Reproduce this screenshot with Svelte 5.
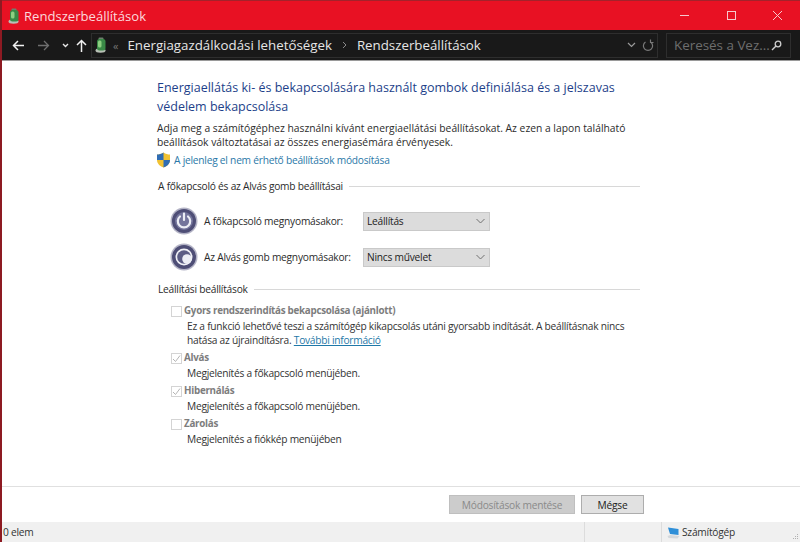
<script>
  const options = [
    {
      title: "Gyors rendszerindítás bekapcsolása (ajánlott)",
      checked: false,
      lines: "Ez a funkció lehetővé teszi a számítógép kikapcsolás utáni gyorsabb indítását. A beállításnak nincs hatása az újraindításra.",
      link: "További információ",
    },
    { title: "Alvás", checked: true, lines: "Megjelenítés a főkapcsoló menüjében." },
    { title: "Hibernálás", checked: true, lines: "Megjelenítés a főkapcsoló menüjében." },
    { title: "Zárolás", checked: false, lines: "Megjelenítés a fiókkép menüjében" },
  ];
</script>

{#snippet battery(w, h)}
  <svg width={w} height={h} viewBox="0 0 12 16">
    <ellipse cx="5.500" cy="13.500" rx="5" ry="2.200" fill="#b9c0b6" />
    <rect x="3.500" y="0.500" width="5" height="2.500" rx="1" fill="#6f7f6e" />
    <rect x="2" y="2" width="8.500" height="11.500" rx="2.500" fill="#3a8a47" />
    <rect x="3" y="3.500" width="3.500" height="7" rx="1.500" fill="#8ccf80" />
  </svg>
{/snippet}

<div class="window">
  <header class="titlebar">
    <div class="title">
      {@render battery(12, 16)}
      <span>Rendszerbeállítások</span>
    </div>
    <div class="controls">
      <svg width="11" height="11" viewBox="0 0 11 11"><path d="M0 5.500h9" stroke="#f6c9cd" fill="none" /></svg>
      <svg width="11" height="11" viewBox="0 0 11 11"><rect x="1.500" y="1.500" width="8" height="8" stroke="#f6c9cd" fill="none" /></svg>
      <svg width="11" height="11" viewBox="0 0 11 11"><path d="M1 1l9 9M10 1l-9 9" stroke="#f6c9cd" fill="none" /></svg>
    </div>
  </header>

  <nav class="navbar">
    <div class="navbtns">
      <svg width="13" height="11" viewBox="0 0 13 11"><path d="M12 5.500H1.500M6 1L1.500 5.500 6 10" stroke="#f2f2f2" stroke-width="1.500" fill="none" /></svg>
      <svg width="13" height="11" viewBox="0 0 13 11"><path d="M1 5.500h10.500M7 1l4.500 4.500L7 10" stroke="#6f6f6f" stroke-width="1.300" fill="none" /></svg>
      <svg width="7" height="5" viewBox="0 0 7 5"><path d="M1 1l2.500 2.500L6 1" stroke="#e8e8e8" stroke-width="1.400" fill="none" /></svg>
      <svg class="up" width="11" height="13" viewBox="0 0 11 13"><path d="M5.500 13V1.500M1 6l4.500-4.500L10 6" stroke="#f2f2f2" stroke-width="1.500" fill="none" /></svg>
    </div>
    <div class="address">
      {@render battery(12, 16)}
      <span class="crumbsep first">«</span>
      <span class="crumb">Energiagazdálkodási lehetőségek</span>
      <svg class="crumbarrow" width="5" height="8" viewBox="0 0 5 8"><path d="M1 1l3 3-3 3" stroke="#8a8a8a" fill="none" /></svg>
      <span class="crumb">Rendszerbeállítások</span>
      <span class="grow"></span>
      <svg width="9" height="6" viewBox="0 0 9 6"><path d="M1 1l3.500 3.500L8 1" stroke="#9a9a9a" stroke-width="1.200" fill="none" /></svg>
      <svg class="refresh" width="12" height="13" viewBox="0 0 12 13"><path d="M8.500 3a4.600 4.600 0 1 1-5 0M8.500 0.500V3.500H11.500" stroke="#7a7a7a" stroke-width="1.200" fill="none" /></svg>
    </div>
    <div class="search">
      <span>Keresés a Vez...</span>
      <svg width="11" height="11" viewBox="0 0 11 11"><circle cx="7" cy="4" r="2.800" stroke="#cfcfcf" stroke-width="1.300" fill="none" /><path d="M5 6L1 10" stroke="#cfcfcf" stroke-width="1.500" /></svg>
    </div>
  </nav>

  <main class="body">
    <div class="content">
      <h1>Energiaellátás ki- és bekapcsolására használt gombok definiálása és a jelszavas védelem bekapcsolása</h1>
      <p class="intro">Adja meg a számítógéphez használni kívánt energiaellátási beállításokat. Az ezen a lapon található<br />beállítások változtatásai az összes energiasémára érvényesek.</p>
      <div class="admin">
        <svg width="15" height="16" viewBox="0 0 15 16">
          <path d="M7.500 0.500C5.500 2 3 2.500 1 2.500V8c0 4 3.500 6.500 6.500 7.500 3-1 6.500-3.500 6.500-7.500V2.500c-2 0-4.500-.5-6.500-2z" fill="#f1c232" />
          <path d="M7.500 0.500C5.500 2 3 2.500 1 2.500V8h6.500zM7.500 8v7.500c3-1 6.500-3.500 6.500-7.500z" fill="#2f6db5" />
        </svg>
        <span>A jelenleg el nem érhető beállítások módosítása</span>
      </div>

      <div class="section first"><span>A főkapcsoló és az Alvás gomb beállításai</span><i></i></div>

      <div class="power-rows">
        <div class="power-row">
          <svg width="28" height="28" viewBox="0 0 28 28">
            <circle cx="14" cy="14" r="13.500" fill="#b4b4c6" />
            <circle cx="14" cy="14" r="12" fill="#4e4e76" />
            <circle cx="14" cy="14" r="9" fill="#74759c" />
            <path d="M10 9.500a6.200 6.200 0 1 0 8 0M14 6.500v6.500" stroke="#eceef5" stroke-width="2.200" fill="none" stroke-linecap="round" />
          </svg>
          <span class="label">A főkapcsoló megnyomásakor:</span>
          <div class="select"><span>Leállítás</span><svg width="9" height="6" viewBox="0 0 9 6"><path d="M0.500 1l4 4 4-4" stroke="#707070" fill="none" /></svg></div>
        </div>
        <div class="power-row">
          <svg width="28" height="28" viewBox="0 0 28 28">
            <circle cx="14" cy="14" r="13.500" fill="#b4b4c6" />
            <circle cx="14" cy="14" r="12" fill="#4e4e76" />
            <circle cx="14" cy="14" r="8.500" fill="#f1f2f7" />
            <circle cx="14" cy="14" r="6.800" fill="#5b5c84" />
            <circle cx="17" cy="16" r="4.800" fill="#eceef5" />
          </svg>
          <span class="label">Az Alvás gomb megnyomásakor:</span>
          <div class="select"><span>Nincs művelet</span><svg width="9" height="6" viewBox="0 0 9 6"><path d="M0.500 1l4 4 4-4" stroke="#707070" fill="none" /></svg></div>
        </div>
      </div>

      <div class="section second"><span>Leállítási beállítások</span><i></i></div>

      <div class="options">
        {#each options as opt}
          <div class="option">
            <span class="box">
              {#if opt.checked}
                <svg width="9" height="9" viewBox="0 0 9 9"><path d="M1 5l2.500 2.500L8 1.500" stroke="#b5b5b5" fill="none" /></svg>
              {/if}
            </span>
            <div class="option-text">
              <div class="option-title">{opt.title}</div>
              <div class="option-desc">{opt.lines}{#if opt.link}{" "}<a href="#top">{opt.link}</a>{/if}</div>
            </div>
          </div>
        {/each}
      </div>
    </div>
  </main>

  <div class="actions">
    <button class="save" disabled>Módosítások mentése</button>
    <button class="cancel">Mégse</button>
  </div>

  <footer class="status">
    <span class="count">0 elem</span>
    <span class="cell empty"></span>
    <span class="cell computer">
      <svg width="13" height="13" viewBox="0 0 13 13">
        <path d="M1 1.500l10.500 1.500v6L3 8z" fill="#2f8fd8" />
        <path d="M0.500 10l3-1 9 1-2 2.500-9-.5z" fill="#d4d8dc" />
      </svg>
      Számítógép
    </span>
    <svg class="grip" width="8" height="8" viewBox="0 0 8 8"><path d="M6 1h1v1H6zM4 3h1v1H4zM6 3h1v1H6zM2 5h1v1H2zM4 5h1v1H4zM6 5h1v1H6z" fill="#b0b0b0" /></svg>
  </footer>
</div>

<style>
  :global(body) {
    margin: 0;
    background: #fff;
  }

  .window {
    width: 800px;
    height: 542px;
    box-sizing: border-box;
    display: flex;
    flex-direction: column;
    border-left: 2px solid #8d1a22;
    font-family: "Open Sans", "Noto Sans", sans-serif;
    font-size: 10.200px;
    letter-spacing: -0.230px;
    color: #2b2b2b;
    overflow: hidden;
  }

  .titlebar {
    height: 30px;
    margin-left: -2px;
    flex: none;
    box-sizing: border-box;
    border-top: 1px solid #a3222b;
    background: #e81123;
    display: flex;
    align-items: center;
    justify-content: space-between;
    padding: 0 0 0 8px;
  }

  .title {
    display: flex;
    align-items: center;
    gap: 4px;
    font-size: 13.100px;
    letter-spacing: 0;
    color: #fbd9dc;
  }

  .controls {
    display: flex;
    gap: 35px;
    padding-right: 17px;
    align-items: center;
  }

  .navbar {
    height: 31px;
    margin-left: -2px;
    flex: none;
    box-sizing: border-box;
    background: #191919;
    border-bottom: 1px solid #9a9a9a;
    display: flex;
    align-items: center;
    padding: 0 8px 0 12px;
    letter-spacing: 0;
  }

  .navbtns {
    display: flex;
    align-items: center;
    gap: 12px;
    width: 79px;
    flex: none;
  }

  .up {
    margin-left: -5px;
  }

  .address {
    width: 567px;
    height: 25px;
    flex: none;
    box-sizing: border-box;
    border: 1px solid #2e2e2e;
    display: flex;
    align-items: center;
    padding: 0 3px;
    color: #e6e6e6;
    font-size: 13.300px;
  }

  .crumbsep {
    color: #777;
    font-size: 11px;
    margin: 0 9px 0 6px;
  }

  .crumbarrow {
    margin: 0 10px;
  }

  .grow {
    flex: 1;
  }

  .refresh {
    margin-left: 6px;
  }

  .search {
    width: 125px;
    height: 25px;
    margin-left: 8px;
    flex: none;
    box-sizing: border-box;
    border: 1px solid #2e2e2e;
    display: flex;
    align-items: center;
    justify-content: space-between;
    padding: 0 8px 0 7px;
    color: #6e6e6e;
    font-size: 13.400px;
  }

  .body {
    flex: 1;
    padding: 17px 0 0 156px;
    background: #fff;
  }

  .content {
    width: 482px;
  }

  h1 {
    margin: 0 0 0 -1px;
    font-size: 12.500px;
    letter-spacing: 0;
    line-height: 19px;
    font-weight: 400;
    color: #1d3f8a;
  }

  .intro {
    margin: 5px 0 0 -1px;
    line-height: 14px;
    font-size: 10.300px;
    letter-spacing: 0;
  }

  .admin {
    display: flex;
    align-items: center;
    gap: 3px;
    margin: 3px 0 0 -2px;
    height: 16px;
    color: #2a78a8;
  }

  .section {
    display: flex;
    align-items: center;
    gap: 6px;
  }

  .section i {
    flex: 1;
    height: 1px;
    background: #d8d8d8;
  }

  .section.first {
    margin-top: 11px;
  }

  .section.second {
    margin-top: 11px;
  }

  .power-rows {
    display: flex;
    flex-direction: column;
    gap: 8px;
    padding: 14px 0 0 12px;
  }

  .power-row {
    display: flex;
    align-items: center;
    height: 28px;
  }

  .label {
    width: 159px;
    margin-left: 6px;
    flex: none;
  }

  .select {
    width: 127px;
    height: 19px;
    box-sizing: border-box;
    background: #dcdcdc;
    border: 1px solid #c9c9c9;
    display: flex;
    align-items: center;
    justify-content: space-between;
    padding: 0 4px 0 3px;
    color: #222;
  }

  .options {
    display: flex;
    flex-direction: column;
    padding: 8px 0 0 13px;
    gap: 4px;
  }

  .option {
    display: flex;
    gap: 2px;
  }

  .box {
    width: 11px;
    height: 11px;
    box-sizing: border-box;
    margin-top: 2px;
    flex: none;
    border: 1px solid #d4d4d4;
    display: flex;
  }

  .option-title {
    font-weight: 700;
    font-size: 9.800px;
    letter-spacing: -0.270px;
    color: #7d7d7d;
    line-height: 14px;
  }

  .option-desc {
    margin: 1px 0 0 3px;
    line-height: 14px;
    font-size: 10.200px;
    letter-spacing: -0.250px;
    color: #333;
  }

  .option-desc a {
    color: #1f78a8;
  }

  .actions {
    height: 36px;
    flex: none;
    box-sizing: border-box;
    border-top: 1px solid #e0e0e0;
    display: flex;
    align-items: center;
    justify-content: flex-end;
    gap: 6px;
    padding-right: 156px;
  }

  button {
    height: 19px;
    box-sizing: border-box;
    font: inherit;
    letter-spacing: inherit;
    padding: 0;
  }

  .save {
    width: 126px;
    background: #cccccc;
    border: 1px solid #bfbfbf;
    color: #8a8a8a;
  }

  .cancel {
    width: 63px;
    background: #e1e1e1;
    border: 1px solid #adadad;
    color: #222;
  }

  .status {
    height: 20px;
    flex: none;
    background: #f0f0f0;
    display: flex;
    align-items: center;
    position: relative;
    color: #333;
  }

  .count {
    width: 582px;
    padding-left: 1px;
    box-sizing: border-box;
    flex: none;
  }

  .cell {
    height: 100%;
    display: flex;
    align-items: center;
    border-left: 1px solid #dcdcdc;
    box-sizing: border-box;
  }

  .cell.empty {
    width: 77px;
  }

  .computer {
    gap: 2px;
    padding-left: 5px;
  }

  .grip {
    position: absolute;
    right: 1px;
    bottom: 1px;
  }
</style>
